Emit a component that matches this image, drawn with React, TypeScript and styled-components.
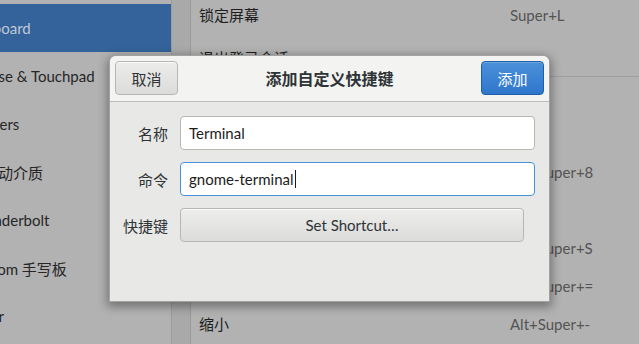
import React from "react";
import styled, { createGlobalStyle } from "styled-components";

const GlobalStyle = createGlobalStyle`
  html, body {
    margin: 0;
    padding: 0;
  }
  body {
    font-family: Lato, "Noto Sans CJK SC", sans-serif;
    font-size: 15px;
    color: #2e3436;
    overflow: hidden;
  }
`;

const Screen = styled.div`
  position: relative;
  display: flex;
  width: 639px;
  height: 344px;
  background: #b2b2b2;
  overflow: hidden;
`;

const Sidebar = styled.div`
  width: 171px;
  padding-top: 4px;
  border-right: 1px solid #9c9c9c;
  overflow: hidden;
  flex-shrink: 0;
`;

const SideItem = styled.div<{ $active?: boolean }>`
  height: 48px;
  display: flex;
  align-items: center;
  white-space: nowrap;
  background: ${(p) => (p.$active ? "#33639a" : "transparent")};
  color: ${(p) => (p.$active ? "#bfc8d5" : "#262626")};
`;

// the window is cropped on the left, so labels start off-screen
const SideLabel = styled.span`
  margin-left: -32px;
`;

const Strip = styled.div`
  width: 18px;
  flex-shrink: 0;
  background: #a9a9a9;
  border-right: 1px solid #9a9a9a;
`;

const Content = styled.div`
  flex: 1;
  display: flex;
  flex-direction: column;
`;

const ShortcutRow = styled.div<{ $h: number; $divider?: boolean; $bottom?: boolean }>`
  height: ${(p) => p.$h}px;
  flex-shrink: 0;
  display: flex;
  align-items: ${(p) => (p.$bottom ? "flex-end" : "center")};
  padding: ${(p) => (p.$bottom ? "0 0 8px 8px" : "0 0 0 8px")};
  box-sizing: border-box;
  border-bottom: ${(p) => (p.$divider ? "1px solid #9e9e9e" : "none")};
  line-height: 20px;
`;

const ShortcutName = styled.span`
  width: 311px;
  color: #1e1e1e;
  white-space: nowrap;
`;

const ShortcutKeys = styled.span`
  color: #545454;
`;

const Dialog = styled.div`
  position: absolute;
  left: 109px;
  top: 55px;
  width: 441px;
  height: 247px;
  box-sizing: border-box;
  border: 1px solid rgba(0, 0, 0, 0.3);
  border-radius: 7px 7px 0 0;
  background: #e8e8e7;
  box-shadow: 0 3px 10px 2px rgba(0, 0, 0, 0.35);
  overflow: hidden;
  display: flex;
  flex-direction: column;
`;

const HeaderBar = styled.div`
  height: 46px;
  box-sizing: border-box;
  padding: 5px 5px 6px 5px;
  display: flex;
  align-items: center;
  justify-content: space-between;
  background: #f3f3f2;
  border-bottom: 1px solid #bdbdb9;
`;

const Title = styled.div`
  font-weight: bold;
  font-size: 16px;
  color: #2e3436;
`;

const HeaderButton = styled.button<{ $primary?: boolean }>`
  width: 63px;
  height: 34px;
  border-radius: 4px;
  font-family: inherit;
  font-size: 15px;
  border: 1px solid ${(p) => (p.$primary ? "#1f5ea8" : "#b6b6b3")};
  background: ${(p) =>
    p.$primary
      ? "linear-gradient(to bottom, #4a90d9, #2f77cc)"
      : "linear-gradient(to bottom, #ececeb, #dcdcda)"};
  color: ${(p) => (p.$primary ? "#ffffff" : "#2e3436")};
  box-shadow: inset 0 1px rgba(255, 255, 255, ${(p) => (p.$primary ? 0.2 : 0.8)});
  padding: 0;
`;

const Form = styled.div`
  display: grid;
  grid-template-columns: 45px 1fr;
  column-gap: 12px;
  row-gap: 12px;
  padding: 14px 14px 0 13px;
  align-items: center;
`;

const FieldLabel = styled.div`
  text-align: right;
  color: #2e3436;
  white-space: nowrap;
`;

const Entry = styled.div<{ $focus?: boolean }>`
  height: 34px;
  box-sizing: border-box;
  border: 1px solid ${(p) => (p.$focus ? "#4a90d9" : "#b6b6b3")};
  border-radius: 4px;
  background: #ffffff;
  display: flex;
  align-items: center;
  padding-left: 8px;
  color: #1c1c1c;
`;

const Caret = styled.span`
  display: inline-block;
  width: 1px;
  height: 18px;
  background: #1c1c1c;
  margin-left: 1px;
`;

const ShortcutButton = styled.div`
  width: 344px;
  height: 34px;
  box-sizing: border-box;
  border: 1px solid #b6b6b3;
  border-radius: 4px;
  background: linear-gradient(to bottom, #ededec, #dcdcda);
  box-shadow: inset 0 1px rgba(255, 255, 255, 0.8);
  display: flex;
  align-items: center;
  justify-content: center;
  color: #2e3436;
`;

const sideItems = [
  { label: "Keyboard", active: true },
  { label: "Mouse & Touchpad" },
  { label: "Printers" },
  { label: "可移动介质" },
  { label: "Thunderbolt" },
  { label: "Wacom 手写板" },
  { label: "Color" },
];

const rows = [
  { name: "锁定屏幕", keys: "Super+L", h: 29 },
  { name: "退出登录会话", keys: "", h: 48, divider: true, bottom: true },
  { name: "开启或关闭高对比度", keys: "", h: 38 },
  { name: "增大文本大小", keys: "", h: 38 },
  { name: "开启或关闭缩放", keys: "Alt+Super+8", h: 38 },
  { name: "开启或关闭屏幕键盘", keys: "", h: 38 },
  { name: "开启或关闭屏幕阅读器", keys: "Alt+Super+S", h: 38 },
  { name: "放大", keys: "Alt+Super+=", h: 38 },
  { name: "缩小", keys: "Alt+Super+-", h: 38 },
];

export default function App() {
  return (
    <>
      <GlobalStyle />
      <Screen>
        <Sidebar>
          {sideItems.map((it) => (
            <SideItem key={it.label} $active={it.active}>
              <SideLabel>{it.label}</SideLabel>
            </SideItem>
          ))}
        </Sidebar>
        <Strip />
        <Content>
          {rows.map((r) => (
            <ShortcutRow key={r.name} $h={r.h} $divider={r.divider} $bottom={r.bottom}>
              <ShortcutName>{r.name}</ShortcutName>
              <ShortcutKeys>{r.keys}</ShortcutKeys>
            </ShortcutRow>
          ))}
        </Content>

        <Dialog>
          <HeaderBar>
            <HeaderButton>取消</HeaderButton>
            <Title>添加自定义快捷键</Title>
            <HeaderButton $primary>添加</HeaderButton>
          </HeaderBar>
          <Form>
            <FieldLabel>名称</FieldLabel>
            <Entry>Terminal</Entry>
            <FieldLabel>命令</FieldLabel>
            <Entry $focus>
              gnome-terminal
              <Caret />
            </Entry>
            <FieldLabel>快捷键</FieldLabel>
            <ShortcutButton>Set Shortcut…</ShortcutButton>
          </Form>
        </Dialog>
      </Screen>
    </>
  );
}
